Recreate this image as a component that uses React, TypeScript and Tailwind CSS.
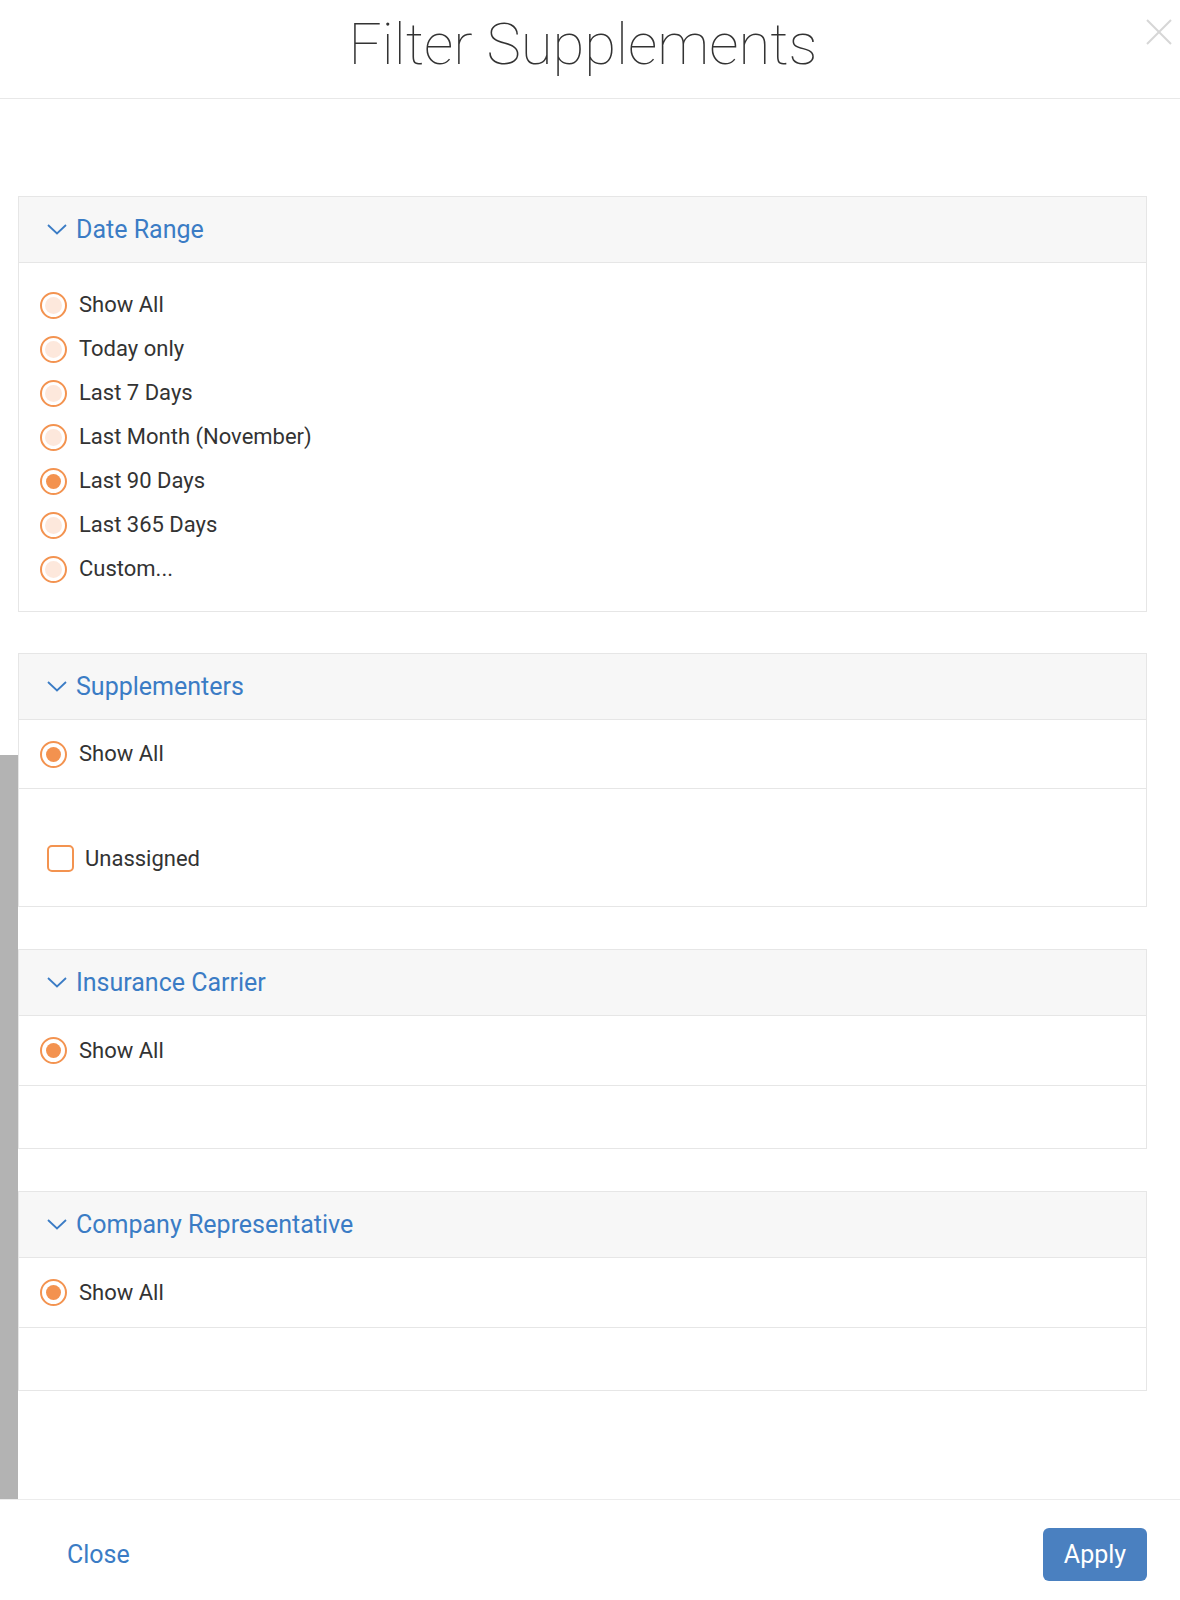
import React from "react";

const BLUE = "text-[#3b7cc5]";

function Chevron() {
  return (
    <svg width="20" height="11" viewBox="0 0 20 11" className="shrink-0">
      <polyline points="1,1 10,9.5 19,1" fill="none" stroke="#3b7cc5" strokeWidth="1.8" />
    </svg>
  );
}

function Radio({ checked, label }: { checked?: boolean; label: string }) {
  return (
    <div className="flex items-center gap-[12px]">
      <span className="w-[27px] h-[27px] rounded-full border-2 border-[#f39350] flex items-center justify-center shrink-0 bg-white">
        {checked ? (
          <span className="w-[15px] h-[15px] rounded-full bg-[#f3924f]" />
        ) : (
          <span className="w-[17px] h-[17px] rounded-full bg-[#fde8dc]" />
        )}
      </span>
      <span className="text-[22px] text-[#333333] leading-none">{label}</span>
    </div>
  );
}

function PanelHeader({ title }: { title: string }) {
  return (
    <div className="h-[66px] bg-[#f7f7f7] border-b border-[#e6e6e6] flex items-center gap-[9px] pl-[28px]">
      <Chevron />
      <span className={`text-[25px] ${BLUE} leading-none`}>{title}</span>
    </div>
  );
}

export default function App() {
  const dateOptions = [
    "Show All",
    "Today only",
    "Last 7 Days",
    "Last Month (November)",
    "Last 90 Days",
    "Last 365 Days",
    "Custom...",
  ];
  return (
    <div
      className="w-[1180px] h-[1600px] bg-white flex flex-col"
      style={{ fontFamily: "Roboto, 'Liberation Sans', sans-serif" }}
    >
      {/* Header */}
      <div className="relative h-[99px] border-b border-[#e8e8e8] shrink-0">
        <div className="pt-[8px] pr-[14px] text-center text-[58px] leading-[72px] font-thin text-[#333333]">
          Filter Supplements
        </div>
        <button className="absolute left-[1145px] top-[18px] w-[28px] h-[28px]" aria-label="close">
          <svg width="28" height="28" viewBox="0 0 28 28">
            <line x1="2" y1="2" x2="26" y2="26" stroke="#d6d6d6" strokeWidth="2" />
            <line x1="26" y1="2" x2="2" y2="26" stroke="#d6d6d6" strokeWidth="2" />
          </svg>
        </button>
      </div>

      {/* Body */}
      <div className="flex-1 flex min-h-0">
        <div className="w-[18px] shrink-0 flex flex-col pt-[656px]">
          <div className="flex-1 bg-[#b3b3b3]" />
        </div>
        <div className="flex-1 pr-[33px] pt-[97px] flex flex-col">
          {/* Date Range */}
          <div className="border border-[#e6e6e6]">
            <PanelHeader title="Date Range" />
            <div className="pl-[21px] pt-[20px] pb-[20px] flex flex-col">
              {dateOptions.map((o) => (
                <div key={o} className="h-[44px] flex items-center">
                  <Radio label={o} checked={o === "Last 90 Days"} />
                </div>
              ))}
            </div>
          </div>

          {/* Supplementers */}
          <div className="border border-[#e6e6e6] mt-[41px]">
            <PanelHeader title="Supplementers" />
            <div className="h-[69px] border-b border-[#e6e6e6] pl-[21px] flex items-center">
              <Radio label="Show All" checked />
            </div>
            <div className="h-[117px] pl-[28px] pt-[56px]">
              <div className="flex items-center gap-[11px]">
                <span className="w-[27px] h-[27px] rounded-[5px] border-2 border-[#f39350] bg-white shrink-0" />
                <span className="text-[22px] text-[#333333] leading-none">Unassigned</span>
              </div>
            </div>
          </div>

          {/* Insurance Carrier */}
          <div className="border border-[#e6e6e6] mt-[42px]">
            <PanelHeader title="Insurance Carrier" />
            <div className="h-[70px] border-b border-[#e6e6e6] pl-[21px] flex items-center">
              <Radio label="Show All" checked />
            </div>
            <div className="h-[62px]" />
          </div>

          {/* Company Representative */}
          <div className="border border-[#e6e6e6] mt-[42px]">
            <PanelHeader title="Company Representative" />
            <div className="h-[70px] border-b border-[#e6e6e6] pl-[21px] flex items-center">
              <Radio label="Show All" checked />
            </div>
            <div className="h-[62px]" />
          </div>
        </div>
      </div>

      {/* Footer */}
      <div className="h-[101px] shrink-0 border-t border-[#ececec] flex items-center justify-between pl-[67px] pr-[33px] pt-[8px]">
        <button className={`text-[25px] ${BLUE} leading-none`}>Close</button>
        <button className="w-[104px] h-[53px] rounded-[6px] bg-[#4a80c0] text-white text-[25px] leading-none">
          Apply
        </button>
      </div>
    </div>
  );
}
